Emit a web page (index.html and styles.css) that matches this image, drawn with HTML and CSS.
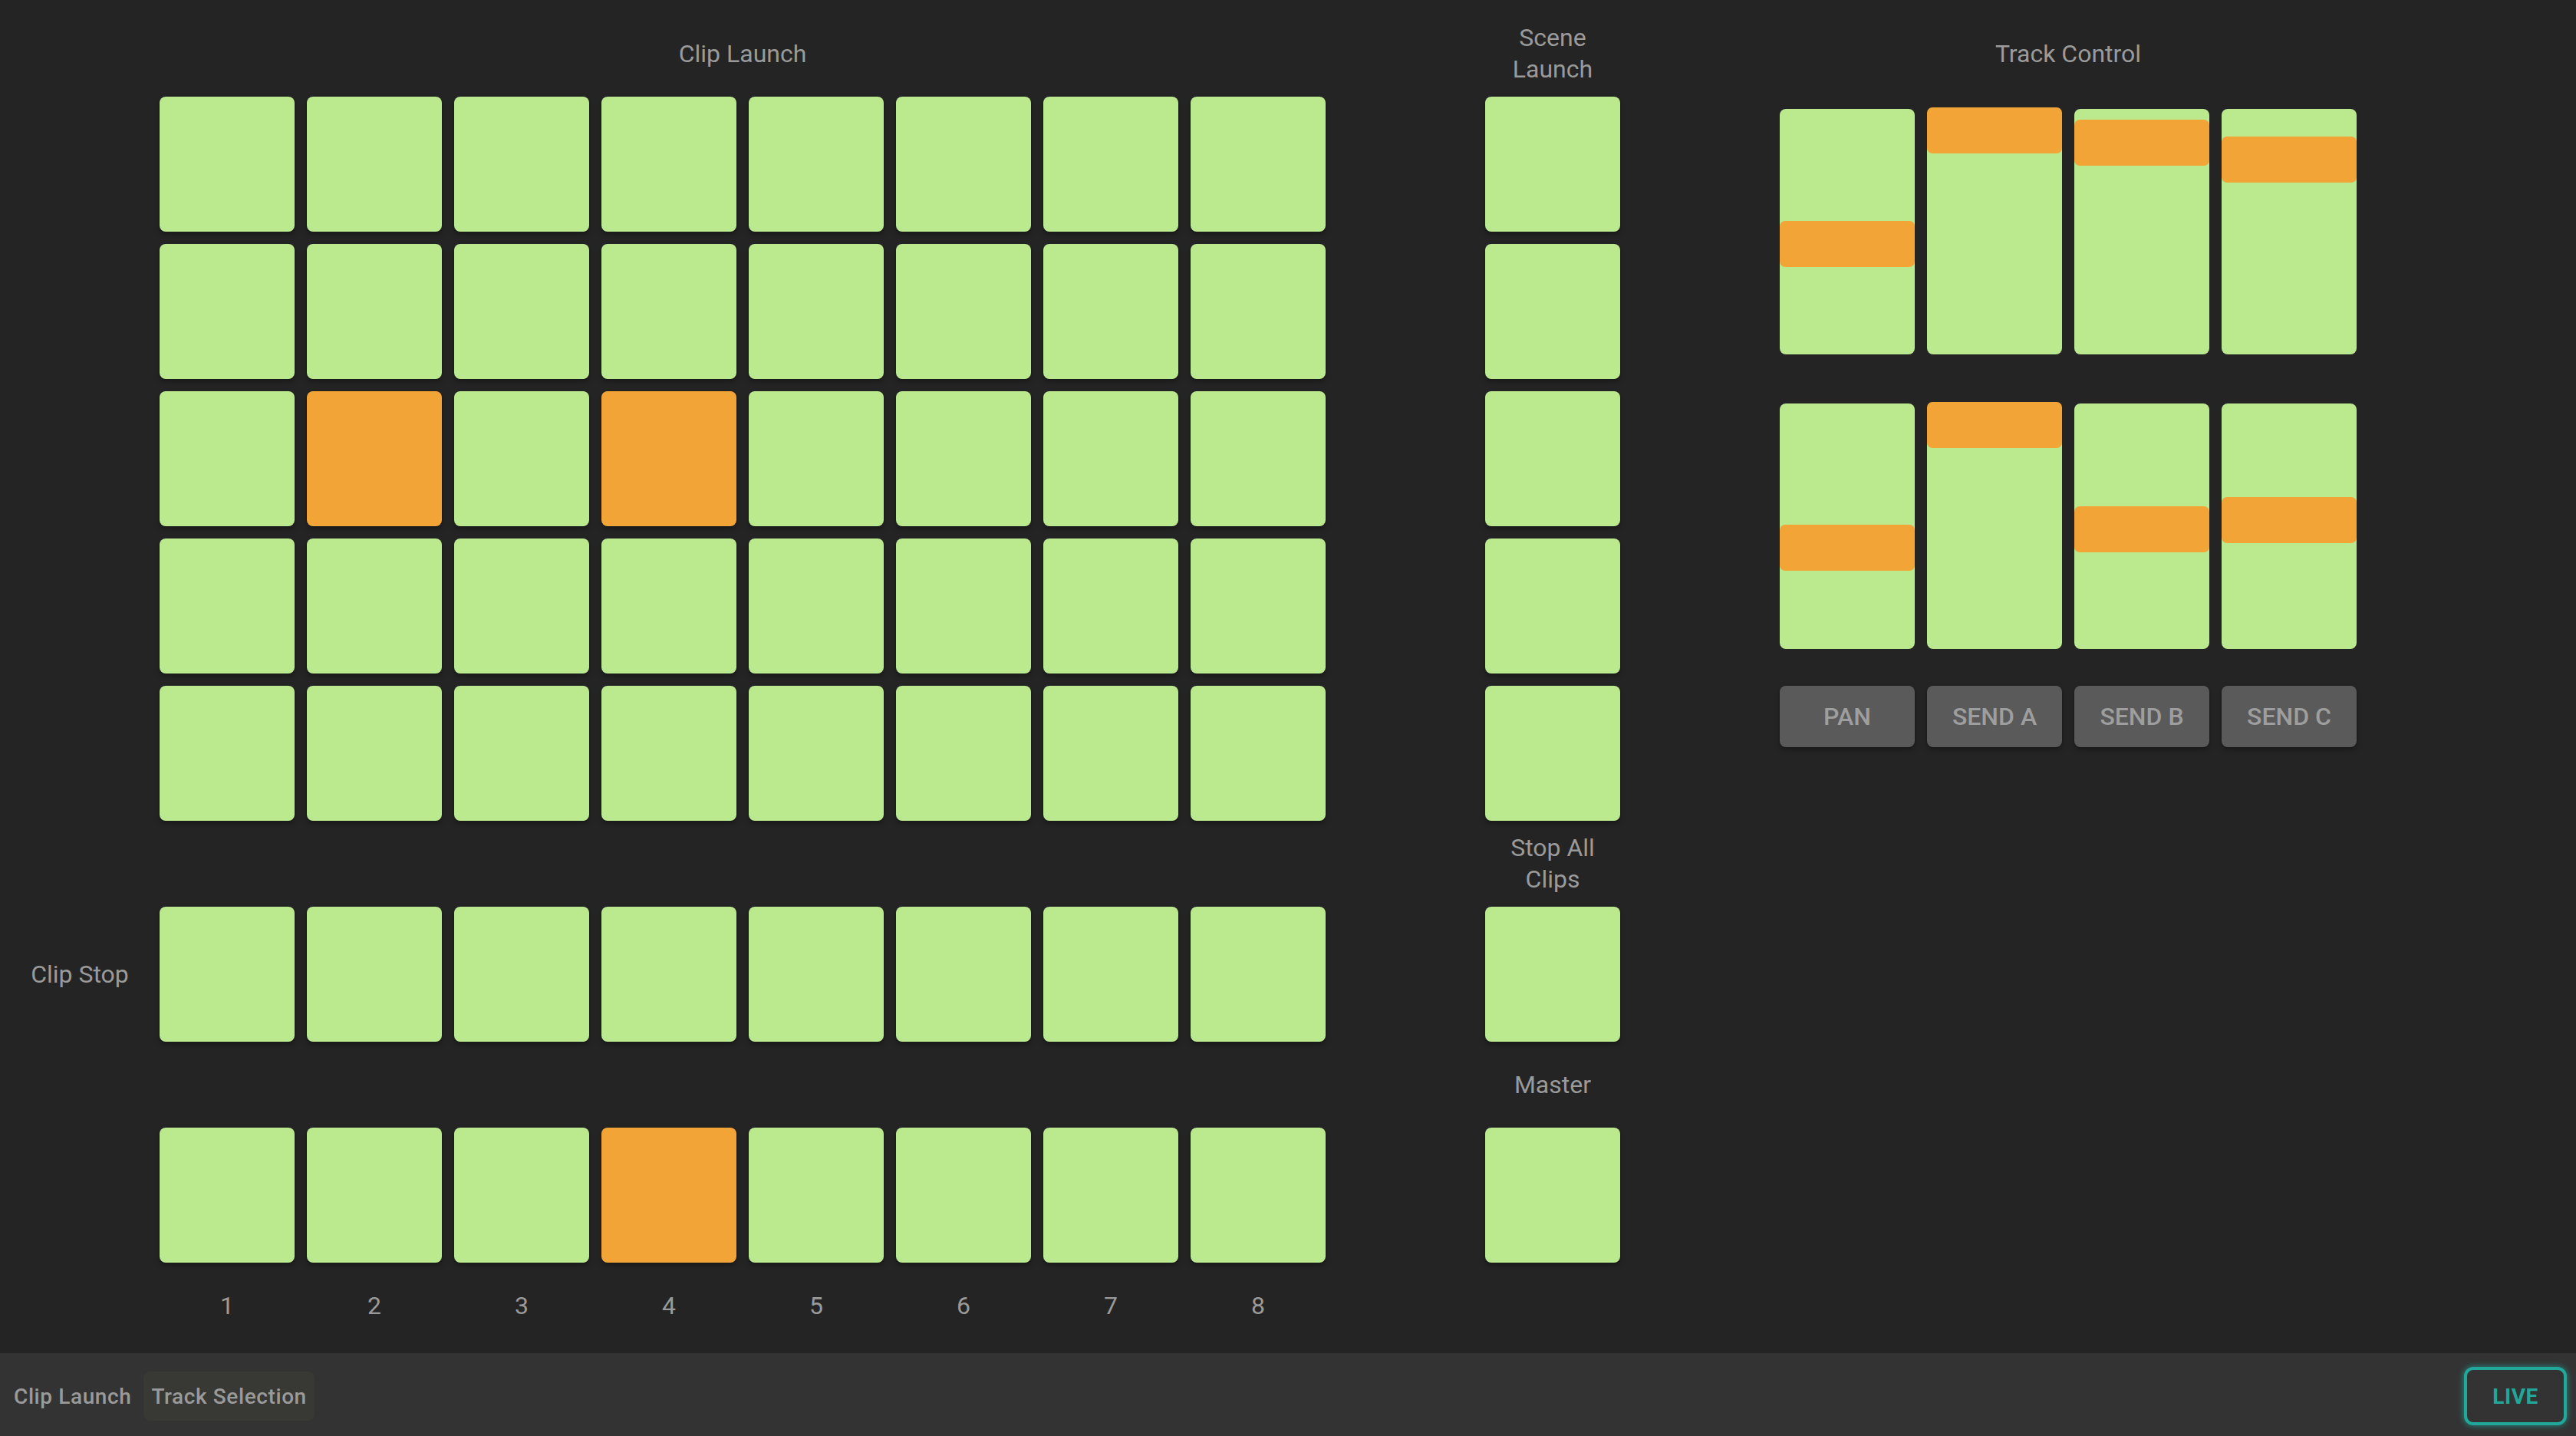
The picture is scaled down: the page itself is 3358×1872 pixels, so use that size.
FILE: index.html
```html
<!DOCTYPE html>
<html lang="en">
<head>
<meta charset="utf-8">
<title>Controller</title>
<link rel="stylesheet" href="styles.css">
</head>
<body>
<div class="app">
  <main class="surface">
    <section class="launcher">
      <div></div>
      <div class="label span8">Clip Launch</div>
      <div></div>
      <div class="label">Scene Launch</div>

      <div></div>
      <div class="pad"></div><div class="pad"></div><div class="pad"></div><div class="pad"></div>
      <div class="pad"></div><div class="pad"></div><div class="pad"></div><div class="pad"></div>
      <div></div><div class="pad"></div>

      <div></div>
      <div class="pad"></div><div class="pad"></div><div class="pad"></div><div class="pad"></div>
      <div class="pad"></div><div class="pad"></div><div class="pad"></div><div class="pad"></div>
      <div></div><div class="pad"></div>

      <div></div>
      <div class="pad"></div><div class="pad on"></div><div class="pad"></div><div class="pad on"></div>
      <div class="pad"></div><div class="pad"></div><div class="pad"></div><div class="pad"></div>
      <div></div><div class="pad"></div>

      <div></div>
      <div class="pad"></div><div class="pad"></div><div class="pad"></div><div class="pad"></div>
      <div class="pad"></div><div class="pad"></div><div class="pad"></div><div class="pad"></div>
      <div></div><div class="pad"></div>

      <div></div>
      <div class="pad"></div><div class="pad"></div><div class="pad"></div><div class="pad"></div>
      <div class="pad"></div><div class="pad"></div><div class="pad"></div><div class="pad"></div>
      <div></div><div class="pad"></div>

      <div></div>
      <div class="span8"></div>
      <div></div>
      <div class="label">Stop All Clips</div>

      <div class="label">Clip Stop</div>
      <div class="pad"></div><div class="pad"></div><div class="pad"></div><div class="pad"></div>
      <div class="pad"></div><div class="pad"></div><div class="pad"></div><div class="pad"></div>
      <div></div><div class="pad"></div>

      <div></div>
      <div class="span8"></div>
      <div></div>
      <div class="label">Master</div>

      <div></div>
      <div class="pad"></div><div class="pad"></div><div class="pad"></div><div class="pad on"></div>
      <div class="pad"></div><div class="pad"></div><div class="pad"></div><div class="pad"></div>
      <div></div><div class="pad"></div>

      <div></div>
      <div class="label">1</div><div class="label">2</div><div class="label">3</div><div class="label">4</div>
      <div class="label">5</div><div class="label">6</div><div class="label">7</div><div class="label">8</div>
      <div></div><div></div>
    </section>

    <section class="track-control">
      <div class="label title">Track Control</div>
      <div class="faders first">
        <div class="fader"><div class="thumb" style="top:146px"></div></div>
        <div class="fader"><div class="thumb" style="top:-2px"></div></div>
        <div class="fader"><div class="thumb" style="top:14px"></div></div>
        <div class="fader"><div class="thumb" style="top:36px"></div></div>
      </div>
      <div class="faders second">
        <div class="fader"><div class="thumb" style="top:158px"></div></div>
        <div class="fader"><div class="thumb" style="top:-2px"></div></div>
        <div class="fader"><div class="thumb" style="top:134px"></div></div>
        <div class="fader"><div class="thumb" style="top:122px"></div></div>
      </div>
      <div class="modes">
        <button class="mode">Pan</button>
        <button class="mode">Send A</button>
        <button class="mode">Send B</button>
        <button class="mode">Send C</button>
      </div>
    </section>
  </main>

  <footer class="bar">
    <nav class="tabs">
      <span class="tab">Clip Launch</span>
      <span class="tab active">Track Selection</span>
    </nav>
    <button class="live">LIVE</button>
  </footer>
</div>
</body>
</html>
```

FILE: styles.css
```css
* { box-sizing: border-box; }

html, body {
  margin: 0;
  padding: 0;
  height: 100%;
  background: #242424;
  font-family: Roboto, "Liberation Sans", sans-serif;
  color: #9a9a9a;
}

.app {
  height: 100vh;
  display: flex;
  flex-direction: column;
}

.surface {
  flex: 1;
  display: flex;
  gap: 208px;
  padding: 30px 16px 0 16px;
}

.launcher {
  display: grid;
  grid-template-columns: repeat(11, 176px);
  grid-template-rows: 80px repeat(5, 176px) 80px 176px 80px 176px 80px;
  gap: 16px;
}

.span8 { grid-column: span 8; }

.label {
  display: flex;
  align-items: center;
  justify-content: center;
  text-align: center;
  font-size: 32px;
  line-height: 41px;
  color: #9a9a9a;
}

.pad {
  background: #bae98e;
  border-radius: 8px;
  box-shadow: 0 3px 6px rgba(0, 0, 0, 0.35);
}

.pad.on { background: #f2a536; }

.track-control {
  display: flex;
  flex-direction: column;
}

.title { height: 80px; }

.faders {
  display: grid;
  grid-template-columns: repeat(4, 176px);
  gap: 16px;
}

.faders.first { margin-top: 32px; }
.faders.second { margin-top: 64px; }

.fader {
  position: relative;
  height: 320px;
  background: #bae98e;
  border-radius: 8px;
}

.thumb {
  position: absolute;
  left: 0;
  right: 0;
  height: 60px;
  background: #f2a536;
  border-radius: 7px;
}

.modes {
  margin-top: 48px;
  display: grid;
  grid-template-columns: repeat(4, 176px);
  gap: 16px;
}

.mode {
  height: 80px;
  border: none;
  border-radius: 8px;
  background: #5a5a5a;
  color: #9e9e9e;
  font-family: Roboto, "Liberation Sans", sans-serif;
  font-size: 32px;
  font-weight: 500;
  text-transform: uppercase;
  box-shadow: 0 3px 6px rgba(0, 0, 0, 0.35);
  padding: 0;
}

.bar {
  height: 108px;
  flex: none;
  background: #333333;
  display: flex;
  align-items: center;
  justify-content: space-between;
  padding: 4px 12px 0 8px;
}

.tabs {
  display: flex;
  gap: 6px;
}

.tab {
  height: 64px;
  padding: 0 10px;
  display: flex;
  align-items: center;
  font-size: 28px;
  font-weight: 500;
  letter-spacing: 0.6px;
  color: #9a9a9a;
  border-radius: 8px;
}

.tab.active { background: #383834; }

.live {
  width: 134px;
  height: 76px;
  border: 4px solid #21a89b;
  border-radius: 12px;
  background: #333333;
  color: #21a89b;
  font-family: Roboto, "Liberation Sans", sans-serif;
  font-size: 28px;
  font-weight: 700;
  letter-spacing: 0.5px;
  box-shadow: 0 0 8px rgba(33, 168, 155, 0.8);
  padding: 0;
}
```
